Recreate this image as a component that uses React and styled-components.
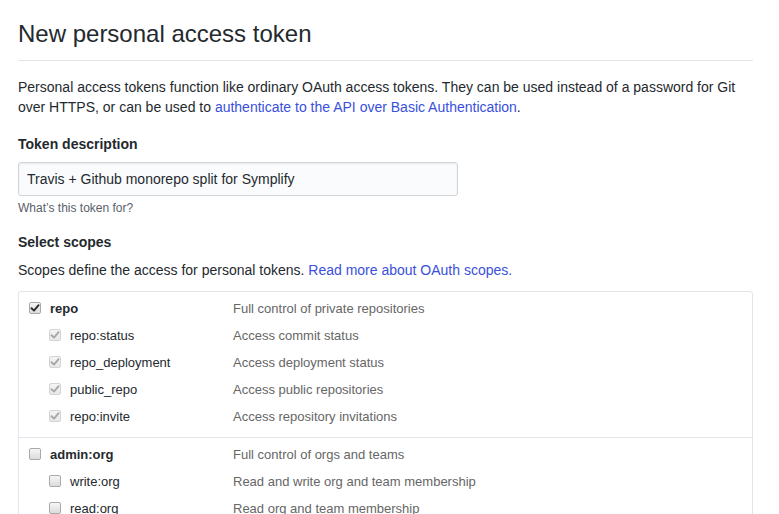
import React from 'react'
import styled, { createGlobalStyle } from 'styled-components'

const GlobalStyle = createGlobalStyle`
    body {
        margin: 0;
        background: #fff;
        font-family: "Liberation Sans", Arial, Helvetica, sans-serif;
        font-size: 14px;
        line-height: 20px;
        color: #24292e;
    }
`

const scopeGroups = [
    {
        name: 'repo',
        description: 'Full control of private repositories',
        checked: true,
        children: [
            { name: 'repo:status', description: 'Access commit status' },
            { name: 'repo_deployment', description: 'Access deployment status' },
            { name: 'public_repo', description: 'Access public repositories' },
            { name: 'repo:invite', description: 'Access repository invitations' },
        ],
    },
    {
        name: 'admin:org',
        description: 'Full control of orgs and teams',
        checked: false,
        children: [
            { name: 'write:org', description: 'Read and write org and team membership' },
            { name: 'read:org', description: 'Read org and team membership' },
        ],
    },
]

const Checkbox = ({ checked, muted }) => (
    <CheckboxBox $muted={muted}>
        {checked && (
            <svg width="10" height="10" viewBox="0 0 10 10">
                <path d="M1.5 5.2 L4 7.6 L8.6 2.2" fill="none" stroke={muted ? '#a8a8a8' : '#2b2b2b'} strokeWidth="1.9" strokeLinecap="round" strokeLinejoin="round" />
            </svg>
        )}
    </CheckboxBox>
)

const App = () => {
    return (
        <>
            <GlobalStyle />
            <Page>
                <Header>
                    <Title>New personal access token</Title>
                </Header>
                <Intro>
                    Personal access tokens function like ordinary OAuth access tokens. They can be used instead of a password for Git
                    over HTTPS, or can be used to <Link href="#">authenticate to the API over Basic Authentication</Link>.
                </Intro>

                <Label>Token description</Label>
                <Input defaultValue="Travis + Github monorepo split for Symplify" />
                <Note>What’s this token for?</Note>

                <Label $top={15}>Select scopes</Label>
                <Hint>
                    Scopes define the access for personal tokens. <Link href="#">Read more about OAuth scopes.</Link>
                </Hint>

                <ScopeBox>
                    {scopeGroups.map(group => (
                        <ScopeGroup key={group.name}>
                            <ScopeRow>
                                <ScopeName>
                                    <Checkbox checked={group.checked} />
                                    <ScopeLabel $bold>{group.name}</ScopeLabel>
                                </ScopeName>
                                <ScopeDescription>{group.description}</ScopeDescription>
                            </ScopeRow>
                            {group.children.map(child => (
                                <ScopeRow key={child.name}>
                                    <ScopeName $indent>
                                        <Checkbox checked={group.checked} muted={group.checked} />
                                        <ScopeLabel>{child.name}</ScopeLabel>
                                    </ScopeName>
                                    <ScopeDescription>{child.description}</ScopeDescription>
                                </ScopeRow>
                            ))}
                        </ScopeGroup>
                    ))}
                </ScopeBox>
            </Page>
        </>
    )
}

export default App

const Page = styled.div`
    width: 735px;
    padding: 16px 0 0 18px;
`

const Header = styled.div`
    border-bottom: 1px solid #e1e4e8;
    padding-bottom: 8px;
    margin-bottom: 16px;
`

const Title = styled.h2`
    margin: 0;
    font-size: 24px;
    font-weight: 400;
    line-height: 36px;
`

const Intro = styled.p`
    margin: 0 0 17px;
`

const Link = styled.a`
    color: #3a50dc;
    text-decoration: none;
`

const Label = styled.div`
    font-weight: 700;
    margin-top: ${p => p.$top || 0}px;
    margin-bottom: 8px;
`

const Input = styled.input`
    display: block;
    box-sizing: border-box;
    width: 440px;
    height: 34px;
    padding: 6px 8px;
    font-family: inherit;
    font-size: 14px;
    color: #24292e;
    background: #fafbfc;
    border: 1px solid #d1d5da;
    border-radius: 3px;
    box-shadow: inset 0 1px 2px rgba(27, 31, 35, 0.075);
    outline: none;
`

const Note = styled.div`
    margin-top: 3px;
    font-size: 12px;
    line-height: 18px;
    color: #586069;
`

const Hint = styled.p`
    margin: 0 0 11px;
`

const ScopeBox = styled.div`
    border: 1px solid #e1e4e8;
    border-radius: 3px;
    font-size: 13px;
`

const ScopeGroup = styled.div`
    padding: 3px 0 7px 10px;
    & + & {
        border-top: 1px solid #e1e4e8;
    }
`

const ScopeRow = styled.div`
    display: flex;
    align-items: center;
    height: 27px;
`

const ScopeName = styled.div`
    display: flex;
    align-items: center;
    width: 204px;
    padding-left: ${p => (p.$indent ? 20 : 0)}px;
    box-sizing: border-box;
`

const CheckboxBox = styled.span`
    display: inline-flex;
    align-items: center;
    justify-content: center;
    box-sizing: border-box;
    width: 12px;
    height: 12px;
    margin-top: -2px;
    border: 1px solid ${p => (p.$muted ? '#d4d4d4' : '#a9a9a9')};
    border-radius: 2px;
    background: ${p => (p.$muted ? 'linear-gradient(#f4f4f4, #e8e8e8)' : 'linear-gradient(#f6f6f6, #dcdcdc)')};
`

const ScopeLabel = styled.span`
    margin-left: 9px;
    font-weight: ${p => (p.$bold ? 700 : 400)};
`

const ScopeDescription = styled.span`
    color: #666;
`
